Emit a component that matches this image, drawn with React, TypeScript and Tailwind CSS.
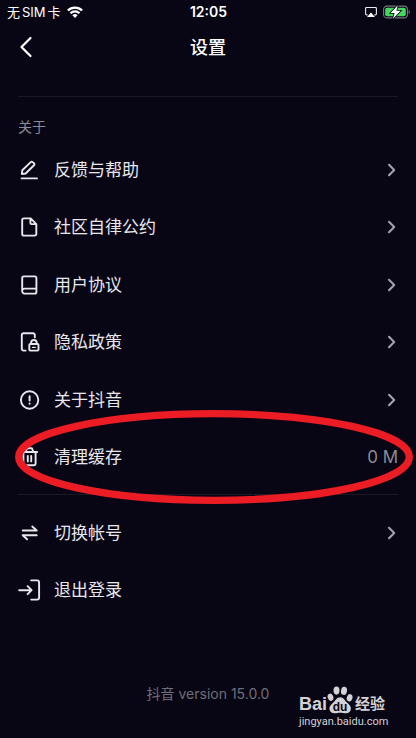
import type { ReactNode } from "react";

type Item = { label: string; icon: ReactNode; value?: string; arrow?: boolean };

function Icon({ children }: { children: ReactNode }) {
  return (
    <svg
      aria-hidden="true"
      className="h-6 w-6 shrink-0"
      viewBox="0 0 24 24"
      fill="none"
      stroke="currentColor"
      strokeWidth="1.9"
      strokeLinecap="round"
      strokeLinejoin="round"
    >
      {children}
    </svg>
  );
}

const aboutItems: Item[] = [
  {
    label: "反馈与帮助",
    arrow: true,
    icon: (
      <Icon>
        <path d="M3.8 16l.5-3.8 8.4-8.1a1.4 1.4 0 0 1 2 0l1.3 1.2a1.4 1.4 0 0 1 0 2L7.6 15.5zM3.6 20.4H19" />
      </Icon>
    ),
  },
  {
    label: "社区自律公约",
    arrow: true,
    icon: (
      <Icon>
        <path d="M12.7 3.4H5.8A1.6 1.6 0 0 0 4.2 5v14a1.6 1.6 0 0 0 1.6 1.6h10.9a1.6 1.6 0 0 0 1.6-1.6V9.1zM12.4 3.6v4.3a1.2 1.2 0 0 0 1.2 1.2h4.5" />
      </Icon>
    ),
  },
  {
    label: "用户协议",
    arrow: true,
    icon: (
      <Icon>
        <path d="M18.4 15.6V5a1.6 1.6 0 0 0-1.6-1.6H5.8A1.6 1.6 0 0 0 4.2 5v13.2M18.4 15.6H6.5a2.4 2.4 0 0 0-2.3 2.5 2.4 2.4 0 0 0 2.3 2.5h10.3a1.6 1.6 0 0 0 1.6-1.6z" />
      </Icon>
    ),
  },
  {
    label: "隐私政策",
    arrow: true,
    icon: (
      <Icon>
        <path d="M16.8 7.4V5A1.8 1.8 0 0 0 15 3.2H5.6A1.8 1.8 0 0 0 3.8 5v13.8a1.8 1.8 0 0 0 1.8 1.8h2" />
        <rect x="11.3" y="14" width="9.2" height="6.6" rx="1" />
        <path d="M13.1 13.8v-1a2.8 2.8 0 0 1 5.6 0v1" />
        <path d="M14.6 17.4h2.6" strokeWidth="1.4" />
      </Icon>
    ),
  },
  {
    label: "关于抖音",
    arrow: true,
    icon: (
      <Icon>
        <circle cx="11.6" cy="12" r="8.7" />
        <path d="M11.6 8.3v4.2M11.6 15.6v.1" strokeWidth="2" />
      </Icon>
    ),
  },
  {
    label: "清理缓存",
    value: "0 M",
    icon: (
      <Icon>
        <path d="M3.8 7h15.4M7.8 6.8L8.7 4a1 1 0 0 1 1-.7h3.6a1 1 0 0 1 1 .7l.9 2.8M5.4 7.2v11.4a1.7 1.7 0 0 0 1.7 1.7h8.8a1.7 1.7 0 0 0 1.7-1.7V7.2M9.8 11v5.4M13.2 11v5.4" />
      </Icon>
    ),
  },
];

const accountItems: Item[] = [
  {
    label: "切换帐号",
    arrow: true,
    icon: (
      <Icon>
        <path d="M4.7 9.5h14l-4.4-4M18.7 14.3h-14l4.4 4" />
      </Icon>
    ),
  },
  {
    label: "退出登录",
    icon: (
      <Icon>
        <path d="M1.2 12.2h12.4M9.6 8.2l4 4-4 4M13.2 2.4h5.9a2 2 0 0 1 2 2v15.2a2 2 0 0 1-2 2h-5.9" />
      </Icon>
    ),
  },
];

function Row({ item }: { item: Item }) {
  return (
    <li className="flex">
      <button type="button" className="flex w-full items-center gap-3 text-left text-[17px] leading-6 text-[#e8e7ee]">
        {item.icon}
        <span className="flex-1">{item.label}</span>
        {item.value && <span className="text-[#8d8b96]">{item.value}</span>}
        {item.arrow && (
          <svg aria-hidden="true" className="mr-px h-4 w-[10px]" viewBox="0 0 10 16" fill="none" stroke="#a3a1ad" strokeWidth="2.1" strokeLinecap="round" strokeLinejoin="round">
            <path d="M2 2.8L7.2 8 2 13.2" />
          </svg>
        )}
      </button>
    </li>
  );
}

function StatusBar() {
  return (
    <div className="grid h-6 grid-cols-3 items-center pr-[6px] pl-[7px] text-[13px] leading-4">
      <div className="flex items-center gap-[2px]">
        <span>无</span>
        <span>SIM</span>
        <span>卡</span>
        <svg aria-label="Wi-Fi" className="ml-1 h-3 w-4" viewBox="0 0 16 12" fill="none" stroke="white" strokeWidth="2.3">
          <path d="M.9 4.5a10 10 0 0 1 14.2 0M3.5 7.2a6.4 6.4 0 0 1 9 0" />
          <path d="M8 11.9L5.4 9.2a3.7 3.7 0 0 1 5.2 0z" fill="white" stroke="none" />
        </svg>
      </div>
      <span className="text-center text-[14px] font-semibold">12:05</span>
      <div className="flex items-center justify-end gap-[6px]">
        <svg aria-label="AirPlay" className="h-3 w-3" viewBox="0 0 12 12" fill="none" stroke="#e9e9ef" strokeWidth="1.1">
          <path d="M2.6 8.9H1.5A.9.9 0 0 1 .6 8V2.4a.9.9 0 0 1 .9-.9h9a.9.9 0 0 1 .9.9V8a.9.9 0 0 1-.9.9H9.4" />
          <path d="M6 6.6l4 4.4H2z" fill="white" stroke="none" />
        </svg>
        <svg aria-label="充电中" className="h-[14px] w-[27px]" viewBox="0 0 27 14">
          <rect x=".6" y="1.1" width="23.8" height="11.8" rx="3.4" fill="none" stroke="#77767f" strokeWidth="1.1" />
          <rect x="2.2" y="2.7" width="20.6" height="8.6" rx="2" fill="#45d860" />
          <path d="M25.6 5v4c.8-.3 1.2-1.1 1.2-2s-.4-1.7-1.2-2z" fill="#77767f" />
          <path d="M14.8.3L7.6 7.9h4L10 13.7l7.6-7.9h-4.2z" fill="white" stroke="#080614" strokeWidth="1.6" paintOrder="stroke" />
        </svg>
      </div>
    </div>
  );
}

function Watermark() {
  return (
    <div className="absolute right-[27px] bottom-2 w-[90px] whitespace-nowrap text-[#d2d1d6]">
      <div className="flex h-7 items-end">
        <span className="font-['Liberation_Sans',sans-serif] text-[18px] leading-5 font-bold">Bai</span>
        <svg aria-hidden="true" className="h-7 w-[26px] shrink-0" viewBox="0 0 26 28" fill="currentColor">
          <ellipse cx="9.5" cy="4.6" rx="3" ry="4.1" />
          <ellipse cx="17" cy="4.8" rx="3" ry="4.1" transform="rotate(8 17 4.8)" />
          <ellipse cx="3.5" cy="11.2" rx="2.8" ry="3.7" transform="rotate(-18 3.5 11.2)" />
          <ellipse cx="22.6" cy="11.8" rx="2.8" ry="3.7" transform="rotate(18 22.6 11.8)" />
          <path d="M13.2 11.2c3.2 0 4.5 3.1 6.5 5 2.3 2.1 4.2 3.5 4.2 6.4 0 3-2 4.7-4.9 4.7-2.3 0-3.7-.5-5.8-.5s-3.4.5-5.6.5c-3.2 0-5.2-1.8-5.2-4.8 0-2.8 2.1-4.2 4.2-6.3 2-2 3.3-5 6.6-5z" />
          <text x="13" y="24.5" textAnchor="middle" fill="#080614" fontFamily="Liberation Sans, sans-serif" fontWeight="700" fontSize="12">du</text>
        </svg>
        <span className="ml-[2px] text-[15px] leading-5 font-bold">经验</span>
      </div>
      <div className="font-[Roboto,sans-serif] text-[11px] leading-4">jingyan.baidu.com</div>
    </div>
  );
}

export default function App() {
  return (
    <main className="relative min-h-screen bg-[#080614] font-[Inter,'Noto_Sans_CJK_SC',sans-serif] text-white">
      <StatusBar />
      <header className="grid h-[46px] grid-cols-[40px_1fr_40px] items-center px-3">
        <button type="button" aria-label="返回" className="flex h-8 items-center pl-1">
          <svg aria-hidden="true" className="h-6 w-5" viewBox="0 0 20 24" fill="none" stroke="white" strokeWidth="2.2" strokeLinecap="round" strokeLinejoin="round">
            <path d="M14.5 3L5.5 12l9 9" />
          </svg>
        </button>
        <h1 className="pt-[2px] text-center text-[18px] leading-6 font-medium">设置</h1>
      </header>

      <div className="px-[18px] pt-[26px]">
        <section className="border-t border-[#1b1926] pt-[18px]">
          <h2 className="h-[26px] text-[14px] leading-6 text-[#8d8b96]">关于</h2>
          <div className="relative">
            <ul className="grid h-[345px] grid-rows-6">
              {aboutItems.map((item) => (
                <Row key={item.label} item={item} />
              ))}
            </ul>
            <svg aria-hidden="true" className="pointer-events-none absolute -right-[15px] -bottom-[18px] h-[94px] w-[398px]" viewBox="0 0 398 94" fill="none">
              <ellipse cx="199" cy="47" rx="195.3" ry="43.3" stroke="#ec1c24" strokeWidth="7.2" />
            </svg>
          </div>
        </section>
        <section className="mt-2 border-t border-[#1b1926] pt-[9px]">
          <ul className="grid h-[115px] grid-rows-2">
            {accountItems.map((item) => (
              <Row key={item.label} item={item} />
            ))}
          </ul>
        </section>
      </div>

      <footer className="pt-[63px] text-center text-[14px] leading-6 text-[#6f6d78]">抖音 version 15.0.0</footer>
      <Watermark />
    </main>
  );
}
